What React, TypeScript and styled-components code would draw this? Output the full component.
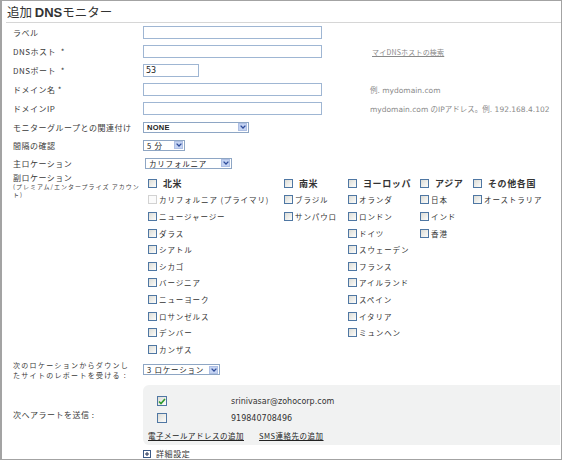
import styled, { createGlobalStyle } from 'styled-components';

const GlobalStyle = createGlobalStyle`
  html, body {
    margin: 0;
    padding: 0;
    background: #fff;
  }
  * {
    box-sizing: border-box;
  }
`;

const JP = `"Noto Sans CJK JP", "DejaVu Sans", sans-serif`;
const LATIN = `"DejaVu Sans", "Noto Sans CJK JP", sans-serif`;

const Frame = styled.div`
  width: 562px;
  height: 460px;
  border: 1px solid #a3a3a3;
  border-left-width: 2px;
  background: #fff;
  font-family: ${JP};
  color: #333;
`;

const Title = styled.h1`
  margin: 0 0 0 4px;
  height: 22px;
  padding: 2px 0 0 1px;
  font-size: 12.5px;
  font-weight: 400;
  line-height: 17px;
  color: #333;
  border-bottom: 1px solid #d6d6d6;

  b {
    font-family: "Liberation Sans", sans-serif;
    font-weight: 700;
    font-size: 13px;
  }
`;

const Row = styled.div<{ $h: number }>`
  display: grid;
  grid-template-columns: 141px 1fr;
  align-items: center;
  height: ${(p) => p.$h}px;
`;

const Label = styled.div<{ $small?: boolean }>`
  padding-left: 11px;
  font-size: ${(p) => (p.$small ? 7 : 8)}px;
  letter-spacing: ${(p) => (p.$small ? 1.3 : 0.5)}px;
  line-height: ${(p) => (p.$small ? 10 : 9)}px;
  color: #3a3a3a;
`;

const Field = styled.div`
  display: flex;
  align-items: center;
`;

const TextBox = styled.div<{ $w: number }>`
  width: ${(p) => p.$w}px;
  height: 13px;
  border: 1px solid #9fb6d3;
  background: #fff;
  font-family: ${LATIN};
  font-size: 8px;
  line-height: 11px;
  padding-left: 2px;
  color: #222;
`;

const Hint = styled.span`
  margin-left: 48px;
  font-family: ${LATIN};
  font-size: 7.5px;
  color: #8a8a8a;
  white-space: nowrap;
`;

const HintLink = styled.a`
  margin-left: 50px;
  font-size: 7px;
  letter-spacing: 0.2px;
  color: #888;
  text-decoration: underline;
  white-space: nowrap;
`;

const Select = styled.div<{ $w: number; $ml?: number }>`
  display: flex;
  align-items: center;
  justify-content: space-between;
  width: ${(p) => p.$w}px;
  height: 11px;
  margin-left: ${(p) => p.$ml || 0}px;
  border: 1px solid #8ea6c4;
  background: #fff;
  padding: 0 1px 0 3px;
  font-size: 7.5px;
  letter-spacing: 0.8px;
  line-height: 9px;
  color: #222;
`;

const SelectBold = styled.span`
  font-family: "Liberation Sans", sans-serif;
  font-weight: 700;
  font-size: 7.5px;
  letter-spacing: 0.3px;
`;

const Arrow = styled.span`
  display: flex;
  align-items: center;
  justify-content: center;
  width: 9px;
  height: 8px;
  background: #c4d3f2;
  border: 1px solid #aebfe4;
`;

const Chevron = () => (
  <svg width="6" height="4" viewBox="0 0 6 4">
    <path d="M0.6 0.6 L3 3 L5.4 0.6" fill="none" stroke="#2f4c9a" strokeWidth="1.3" />
  </svg>
);

const DropDown = ({ w, ml, children }: { w: number; ml?: number; children: React.ReactNode }) => (
  <Select $w={w} $ml={ml}>
    <span>{children}</span>
    <Arrow>
      <Chevron />
    </Arrow>
  </Select>
);

const LocSection = styled.div`
  display: grid;
  grid-template-columns: 141px 1fr;
  align-items: start;
`;

const LocLabel = styled.div`
  padding: 1px 0 0 11px;
  font-size: 8px;
  line-height: 9px;
  letter-spacing: 0.5px;
  color: #3a3a3a;
`;

const LocNote = styled.div`
  margin-top: 1px;
  font-size: 6px;
  line-height: 8px;
  letter-spacing: 1px;
  color: #444;
`;

const Columns = styled.div`
  display: flex;
  padding: 3px 0 0 5px;
`;

const Column = styled.div<{ $w?: number }>`
  width: ${(p) => (p.$w ? `${p.$w}px` : 'auto')};
  display: flex;
  flex-direction: column;
`;

const Item = styled.div<{ $head?: boolean }>`
  display: flex;
  align-items: center;
  gap: ${(p) => (p.$head ? 6 : 2)}px;
  height: 16.6px;
  font-size: ${(p) => (p.$head ? 9 : 7.5)}px;
  font-weight: ${(p) => (p.$head ? 700 : 400)};
  letter-spacing: ${(p) => (p.$head ? 0.6 : 0.9)}px;
  color: #333;
  white-space: nowrap;
`;

const Box = styled.span<{ $disabled?: boolean; $size?: number }>`
  display: inline-flex;
  align-items: center;
  justify-content: center;
  flex: none;
  width: ${(p) => p.$size || 9}px;
  height: ${(p) => p.$size || 9}px;
  border: 1px solid ${(p) => (p.$disabled ? '#d2d2d2' : '#4f77a3')};
  background: ${(p) => (p.$disabled ? '#fbfbfb' : 'linear-gradient(135deg, #dcdcd6, #fdfdfb)')};
`;

const locations = [
  {
    w: 136,
    head: '北米',
    items: [
      'カリフォルニア (プライマリ)',
      'ニュージャージー',
      'ダラス',
      'シアトル',
      'シカゴ',
      'バージニア',
      'ニューヨーク',
      'ロサンゼルス',
      'デンバー',
      'カンザス',
    ],
  },
  { w: 64, head: '南米', items: ['ブラジル', 'サンパウロ'] },
  {
    w: 72,
    head: 'ヨーロッパ',
    items: ['オランダ', 'ロンドン', 'ドイツ', 'スウェーデン', 'フランス', 'アイルランド', 'スペイン', 'イタリア', 'ミュンヘン'],
  },
  { w: 53, head: 'アジア', items: ['日本', 'インド', '香港'] },
  { head: 'その他各国', items: ['オーストラリア'] },
];

const AlertSection = styled.div`
  display: grid;
  grid-template-columns: 141px 1fr;
  align-items: center;
  margin-top: 3px;
`;

const Panel = styled.div`
  height: 60px;
  margin-right: 1px;
  padding: 8px 0 0 5px;
  background: #f1f2f2;
  border-radius: 6px 0 0 6px;
`;

const Contact = styled.div`
  display: grid;
  grid-template-columns: 74px 1fr;
  align-items: center;
  height: 17px;
  padding-left: 9px;
  font-family: ${LATIN};
  font-size: 8px;
  color: #333;
`;

const Links = styled.div`
  display: flex;
  gap: 15px;
  align-items: center;
  height: 17px;
`;

const PanelLink = styled.a`
  font-size: 7.5px;
  letter-spacing: 0.5px;
  color: #222;
  text-decoration: underline;
`;

const Advanced = styled.div`
  display: flex;
  align-items: center;
  gap: 5px;
  height: 12px;
  margin: 3px 0 0 141px;
  font-size: 8px;
  letter-spacing: 0.6px;
  color: #333;
`;

const PlusBox = () => (
  <svg width="8" height="8" viewBox="0 0 8 8">
    <rect x="0.5" y="0.5" width="7" height="7" fill="#fff" stroke="#3c5a86" />
    <path d="M2 4 H6 M4 2 V6" stroke="#1f2f55" strokeWidth="1" />
  </svg>
);

const Check = () => (
  <svg width="8" height="7" viewBox="0 0 8 7">
    <path d="M1 3.5 L3 5.5 L7 1" fill="none" stroke="#2c9a2c" strokeWidth="1.6" />
  </svg>
);

export default function App() {
  return (
    <>
      <GlobalStyle />
      <Frame>
        <Title>
          追加 <b>DNS</b>モニター
        </Title>

        <Row $h={19}>
          <Label>ラベル</Label>
          <Field>
            <TextBox $w={179} />
          </Field>
        </Row>
        <Row $h={19}>
          <Label>DNSホスト &nbsp;*</Label>
          <Field>
            <TextBox $w={179} />
            <HintLink>マイDNSホストの検索</HintLink>
          </Field>
        </Row>
        <Row $h={19}>
          <Label>DNSポート &nbsp;*</Label>
          <Field>
            <TextBox $w={56}>53</TextBox>
          </Field>
        </Row>
        <Row $h={19}>
          <Label>ドメイン名 *</Label>
          <Field>
            <TextBox $w={179} />
            <Hint>例. mydomain.com</Hint>
          </Field>
        </Row>
        <Row $h={19}>
          <Label>ドメインIP</Label>
          <Field>
            <TextBox $w={179} />
            <Hint>mydomain.com のIPアドレス。例. 192.168.4.102</Hint>
          </Field>
        </Row>
        <Row $h={18}>
          <Label>モニターグループとの関連付け</Label>
          <Field>
            <DropDown w={106}>
              <SelectBold>NONE</SelectBold>
            </DropDown>
          </Field>
        </Row>
        <Row $h={18}>
          <Label>間隔の確認</Label>
          <Field>
            <DropDown w={42}>5 分</DropDown>
          </Field>
        </Row>
        <Row $h={18}>
          <Label>主ロケーション</Label>
          <Field>
            <DropDown w={87} ml={2}>
              カリフォルニア
            </DropDown>
          </Field>
        </Row>

        <LocSection>
          <LocLabel>
            副ロケーション
            <LocNote>(プレミアム/エンタープライズ アカウント)</LocNote>
          </LocLabel>
          <Columns>
            {locations.map((col) => (
              <Column key={col.head} $w={col.w}>
                <Item $head>
                  <Box />
                  {col.head}
                </Item>
                {col.items.map((name, i) => (
                  <Item key={name}>
                    <Box $disabled={col.head === '北米' && i === 0} />
                    {name}
                  </Item>
                ))}
              </Column>
            ))}
          </Columns>
        </LocSection>

        <Row $h={24}>
          <Label $small>
            次のロケーションからダウンし
            <br />
            たサイトのレポートを受ける :
          </Label>
          <Field>
            <DropDown w={77}>3 ロケーション</DropDown>
          </Field>
        </Row>

        <AlertSection>
          <Label>次へアラートを送信 :</Label>
          <Panel>
            <Contact>
              <Box $size={10}>
                <Check />
              </Box>
              srinivasar@zohocorp.com
            </Contact>
            <Contact>
              <Box $size={10} />
              919840708496
            </Contact>
            <Links>
              <PanelLink>電子メールアドレスの追加</PanelLink>
              <PanelLink>SMS連絡先の追加</PanelLink>
            </Links>
          </Panel>
        </AlertSection>

        <Advanced>
          <PlusBox />
          詳細設定
        </Advanced>
      </Frame>
    </>
  );
}
